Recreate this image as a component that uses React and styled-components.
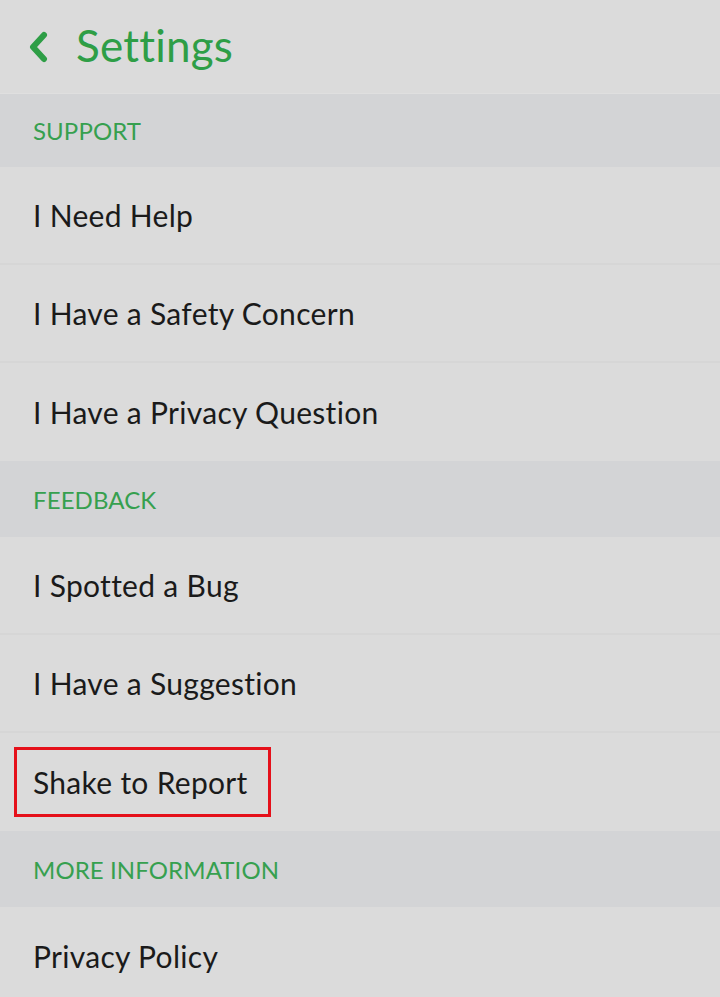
import React from 'react'
import styled, { createGlobalStyle } from 'styled-components'

const GlobalStyles = createGlobalStyle`
  body {
    margin: 0;
    background: #dbdbdb;
    font-family: Lato, "Noto Sans", sans-serif;
  }
`

const Page = styled.div`
  width: 720px;
  height: 997px;
  overflow: hidden;
  background: #dbdbdb;
`

const Header = styled.div`
  height: 94px;
  display: flex;
  align-items: center;
  padding-left: 27px;
  gap: 27px;
  border-bottom: 1px solid #dfdfdf;
  box-sizing: border-box;
`

const Title = styled.h1`
  margin: 0 0 4px;
  font-size: 44px;
  font-weight: 400;
  color: #2e9e46;
  letter-spacing: 0.2px;
`

const SectionHeader = styled.div`
  height: ${p => p.$h || 75}px;
  background: #d3d4d6;
  display: flex;
  align-items: center;
  padding-left: 33px;
  font-size: 24px;
  color: #36a04f;
  letter-spacing: 0.1px;
`

const Row = styled.div`
  height: 98px;
  display: flex;
  align-items: center;
  padding-left: 33px;
  border-bottom: 2px solid #d6d6d6;
  box-sizing: border-box;
  font-size: 30px;
  line-height: 36px;
  letter-spacing: 0.3px;
  color: #1a1a1a;

  &:last-child {
    border-bottom: none;
  }
`

const Highlight = styled.span`
  margin-left: -19px;
  padding: 14px 20px 14px 16px;
  border: 3px solid #e5101a;
`

function Chevron() {
  return (
    <svg width="22" height="32" viewBox="0 0 22 32">
      <path
        d="M17 4 L6 16 L17 28"
        fill="none"
        stroke="#2e9e46"
        strokeWidth="6"
        strokeLinecap="round"
        strokeLinejoin="round"
      />
    </svg>
  )
}

export default function App() {
  return (
    <Page>
      <GlobalStyles />
      <Header>
        <Chevron />
        <Title>Settings</Title>
      </Header>

      <SectionHeader $h={73}>SUPPORT</SectionHeader>
      <div>
        <Row>I Need Help</Row>
        <Row>I Have a Safety Concern</Row>
        <Row>I Have a Privacy Question</Row>
      </div>

      <SectionHeader $h={76}>FEEDBACK</SectionHeader>
      <div>
        <Row>I Spotted a Bug</Row>
        <Row>I Have a Suggestion</Row>
        <Row>
          <Highlight>Shake to Report</Highlight>
        </Row>
      </div>

      <SectionHeader $h={76}>MORE INFORMATION</SectionHeader>
      <div>
        <Row>Privacy Policy</Row>
      </div>
    </Page>
  )
}
